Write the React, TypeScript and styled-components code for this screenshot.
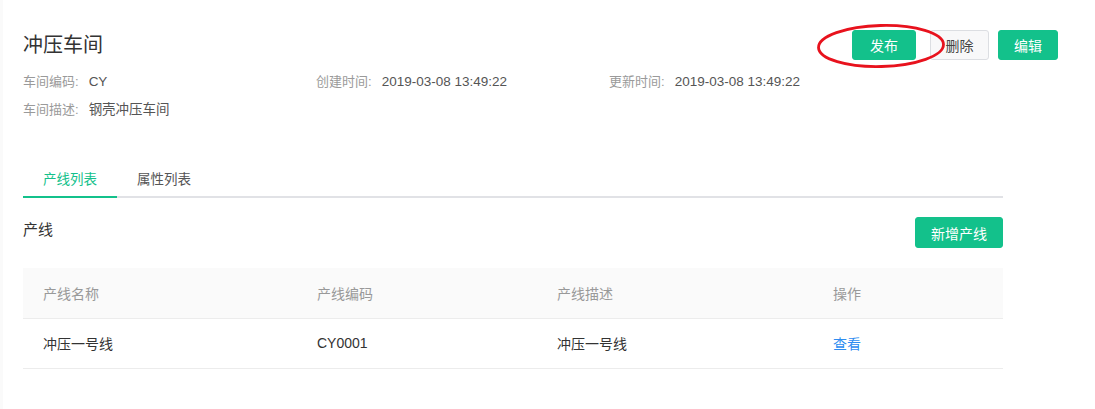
import styled, { createGlobalStyle } from "styled-components";

type Line = { name: string; code: string; desc: string };

const lines: Line[] = [{ name: "冲压一号线", code: "CY0001", desc: "冲压一号线" }];

const GlobalStyle = createGlobalStyle`
  body {
    margin: 0;
    background: #fff;
    font-family: "Liberation Sans", "Noto Sans CJK SC", sans-serif;
    color: #333;
  }
`;

export default function App() {
  return (
    <>
      <GlobalStyle />
      <Page>
        <Header>
          <TitleRow>
            <Title>冲压车间</Title>
            <Actions>
              <Highlight>
                <Button $variant="primary" $width={64}>
                  发布
                </Button>
                <Ellipse viewBox="0 0 130 46" aria-hidden>
                  <ellipse
                    cx="65"
                    cy="23"
                    rx="62.5"
                    ry="20.5"
                    fill="none"
                    stroke="#e8121d"
                    strokeWidth="2.8"
                    transform="rotate(-1.5 65 23)"
                  />
                </Ellipse>
              </Highlight>
              <Button $variant="default" $width={59}>
                删除
              </Button>
              <Button $variant="primary" $width={60}>
                编辑
              </Button>
            </Actions>
          </TitleRow>
          <InfoGrid>
            <InfoItem>
              <Label>车间编码:</Label>
              <Value>CY</Value>
            </InfoItem>
            <InfoItem>
              <Label>创建时间:</Label>
              <Value>2019-03-08 13:49:22</Value>
            </InfoItem>
            <InfoItem>
              <Label>更新时间:</Label>
              <Value>2019-03-08 13:49:22</Value>
            </InfoItem>
            <InfoItem>
              <Label>车间描述:</Label>
              <Value>钢壳冲压车间</Value>
            </InfoItem>
          </InfoGrid>
        </Header>

        <Content>
          <Tabs>
            <Tab $active>产线列表</Tab>
            <Tab>属性列表</Tab>
          </Tabs>

          <SectionBar>
            <SectionTitle>产线</SectionTitle>
            <Button $variant="primary" $width={88} $height={31}>
              新增产线
            </Button>
          </SectionBar>

          <Table>
            <thead>
              <tr>
                <Th style={{ width: 274 }}>产线名称</Th>
                <Th style={{ width: 240 }}>产线编码</Th>
                <Th style={{ width: 276 }}>产线描述</Th>
                <Th>操作</Th>
              </tr>
            </thead>
            <tbody>
              {lines.map((l) => (
                <tr key={l.code}>
                  <Td>{l.name}</Td>
                  <Td>{l.code}</Td>
                  <Td>{l.desc}</Td>
                  <Td>
                    <ViewLink>查看</ViewLink>
                  </Td>
                </tr>
              ))}
            </tbody>
          </Table>
        </Content>
      </Page>
    </>
  );
}

const Page = styled.div`
  width: 1095px;
  height: 409px;
  box-sizing: border-box;
  padding: 30px 0 0 20px;
  border-left: 3px solid #fafafa;
  overflow: hidden;
`;

const Header = styled.div`
  display: flex;
  flex-direction: column;
  width: 1035px;
`;

const TitleRow = styled.div`
  display: flex;
  justify-content: space-between;
  align-items: center;
`;

const Title = styled.h1`
  margin: 0;
  font-size: 20px;
  font-weight: normal;
  line-height: 30px;
  color: #333;
`;

const InfoGrid = styled.div`
  display: grid;
  grid-template-columns: 293px 293px 293px;
  margin-top: 8px;
`;

const InfoItem = styled.div`
  font-size: 13px;
  line-height: 28px;
  white-space: nowrap;
`;

const Label = styled.span`
  color: #9a9a9a;
  margin-right: 10px;
`;

const Value = styled.span`
  color: #555;
  font-size: 13.5px;
`;

const Actions = styled.div`
  display: flex;
  align-items: center;
  gap: 9px;
`;

const Highlight = styled.div`
  position: relative;
  margin-right: 5px;
`;

const Ellipse = styled.svg`
  position: absolute;
  left: -36px;
  top: -7px;
  width: 130px;
  height: 46px;
  pointer-events: none;
  overflow: visible;
`;

const Button = styled.button<{
  $variant: "primary" | "default";
  $width: number;
  $height?: number;
}>`
  box-sizing: border-box;
  display: block;
  height: ${(p) => p.$height ?? 30}px;
  width: ${(p) => p.$width}px;
  padding: 0;
  border-radius: 3px;
  font-family: inherit;
  font-size: 14px;
  cursor: pointer;
  border: 1px solid
    ${(p) => (p.$variant === "primary" ? "#13c18b" : "#dcdee2")};
  background: ${(p) => (p.$variant === "primary" ? "#13c18b" : "#f8f8f9")};
  color: ${(p) => (p.$variant === "primary" ? "#fff" : "#444")};
`;

const Content = styled.div`
  width: 980px;
  margin-top: 40px;
`;

const Tabs = styled.div`
  display: flex;
  border-bottom: 2px solid #e1e2e6;
`;

const Tab = styled.div<{ $active?: boolean }>`
  padding: 0 20px;
  height: 32px;
  line-height: 32px;
  font-size: 13.5px;
  margin-bottom: -2px;
  color: ${(p) => (p.$active ? "#13c18b" : "#555")};
  border-bottom: 2px solid ${(p) => (p.$active ? "#13c18b" : "transparent")};
  cursor: pointer;
`;

const SectionBar = styled.div`
  display: flex;
  justify-content: space-between;
  align-items: flex-start;
  margin-top: 19px;
`;

const SectionTitle = styled.div`
  font-size: 15px;
  line-height: 25px;
  color: #333;
`;

const Table = styled.table`
  width: 100%;
  margin-top: 20px;
  border-collapse: collapse;
  font-size: 14px;
`;

const Th = styled.th`
  height: 50px;
  padding: 0 20px;
  text-align: left;
  font-weight: normal;
  color: #999;
  background: #fafafa;
  border-bottom: 1px solid #ececec;
  box-sizing: border-box;
`;

const Td = styled.td`
  height: 50px;
  padding: 0 20px;
  color: #333;
  border-bottom: 1px solid #ececec;
  box-sizing: border-box;
`;

const ViewLink = styled.a`
  color: #2d8cf0;
  cursor: pointer;
`;
